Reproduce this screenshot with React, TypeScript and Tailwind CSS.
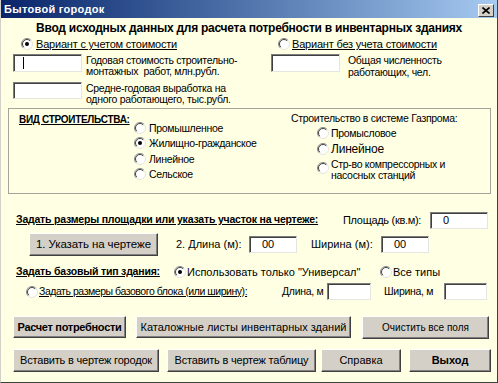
import React from 'react';

// Classic Win2000-style dialog for the "Бытовой городок" calculation

function Radio({ checked }: { checked?: boolean }) {
    return (
        <svg width="12" height="12" viewBox="0 0 12 12" className="shrink-0">
            <circle cx="6" cy="6" r="5.5" fill="#ffffff" />
            <path d="M9.9 2.1 A5.5 5.5 0 0 0 2.1 9.9" stroke="#8a8a8a" strokeWidth="1" fill="none" />
            <path d="M9.2 2.8 A4.5 4.5 0 0 0 2.8 9.2" stroke="#404040" strokeWidth="1" fill="none" />
            <path d="M9.9 2.1 A5.5 5.5 0 0 1 2.1 9.9" stroke="#e4e4dc" strokeWidth="1" fill="none" />
            {checked && <circle cx="6" cy="6" r="2" fill="#000000" />}
        </svg>
    );
}

function Field({ className, value, caret }: { className: string; value?: string; caret?: boolean }) {
    return (
        <div
            className={
                'shrink-0 bg-white border-t border-l border-t-[#7c7c7c] border-l-[#7c7c7c] border-r border-b border-r-[#e6e6e0] border-b-[#e6e6e0] shadow-[inset_1px_1px_0_#404040] flex items-center text-[11px] tracking-normal ' +
                className
            }
        >
            {caret && <div className="ml-[9px] w-[1px] h-[12px] bg-black" />}
            {value && <span className="ml-[12px]">{value}</span>}
        </div>
    );
}

function Button({ className, children }: { className: string; children: React.ReactNode }) {
    return (
        <div
            className={
                'shrink-0 whitespace-nowrap bg-[#d4d0c8] border-t border-l border-t-white border-l-white border-r border-b border-r-[#404040] border-b-[#404040] shadow-[inset_-1px_-1px_0_#808080] flex items-center justify-center ' +
                className
            }
        >
            {children}
        </div>
    );
}

export default function App() {
    return (
        <div className="w-[498px] h-[383px] bg-[#ffffe4] flex flex-col overflow-hidden whitespace-nowrap border-l border-l-[#d4d0c8] border-r border-b border-r-[#404040] border-b-[#404040] text-black text-[10.5px] tracking-[-0.3px] font-['Liberation_Sans',Arial,sans-serif]">
            {/* Title bar */}
            <div className="h-[18px] shrink-0 bg-linear-to-r from-[#0a246a] to-[#a6caf0] flex items-center pl-[3px]">
                <span className="text-white font-bold text-[11px] tracking-[0.3px]">Бытовой городок</span>
                <div className="ml-auto mr-[3px] mt-[2px] w-[16px] h-[13px] bg-[#d4d0c8] border-t border-l border-t-white border-l-white border-r border-b border-r-[#404040] border-b-[#404040] flex items-center justify-center">
                    <svg width="8" height="7" viewBox="0 0 8 7">
                        <path d="M0.5 0.5 L7.5 6.5 M7.5 0.5 L0.5 6.5" stroke="#000" strokeWidth="1.6" />
                    </svg>
                </div>
            </div>

            <div className="mt-[3px] text-center font-bold text-[12px] tracking-[-0.25px] leading-[14px]">
                Ввод исходных данных для расчета потребности в инвентарных зданиях
            </div>

            {/* Variants */}
            <div className="flex mt-[3px]">
                <div className="ml-[12px] w-[258px] flex flex-col">
                    <div className="h-[12px] flex items-center ml-[8px] gap-[3px]">
                        <Radio checked />
                        <span className="underline underline-offset-1 leading-[12px] text-[11px] tracking-[-0.2px]">Вариант с учетом стоимости</span>
                    </div>
                    <div className="flex mt-[4px]">
                        <Field className="w-[69px] h-[18px]" caret />
                        <div className="ml-[4px] mt-[1px] leading-[11px]">
                            Годовая стоимость строительно-
                            <br />
                            монтажных&nbsp; работ, млн.рубл.
                        </div>
                    </div>
                    <div className="flex mt-[5px]">
                        <Field className="w-[69px] h-[17px]" />
                        <div className="ml-[4px] mt-[1px] leading-[11px]">
                            Средне-годовая выработка на
                            <br />
                            одного работающего, тыс.рубл.
                        </div>
                    </div>
                </div>
                <div className="flex flex-col">
                    <div className="h-[12px] flex items-center ml-[7px] gap-[2px]">
                        <Radio />
                        <span className="underline underline-offset-1 leading-[12px] text-[11px] tracking-[-0.2px]">Вариант без учета стоимости</span>
                    </div>
                    <div className="flex mt-[4px]">
                        <Field className="w-[69px] h-[18px]" />
                        <div className="ml-[8px] leading-[12px]">
                            Общая численность
                            <br />
                            работающих, чел.
                        </div>
                    </div>
                </div>
            </div>

            {/* Construction kind frame */}
            <div className="ml-[7px] mt-[3px] w-[483px] h-[86px] shrink-0 border border-[#a4a49a] flex pt-[3px]">
                <div className="w-[282px] flex">
                    <div className="ml-[10px] mt-[2px] w-[115px] font-bold underline underline-offset-1 leading-[12px] text-[10px] tracking-[-0.3px]">
                        ВИД СТРОИТЕЛЬСТВА:
                    </div>
                    <div className="mt-[8px] flex flex-col">
                        {['Промышленное', 'Жилищно-гражданское', 'Линейное', 'Сельское'].map((t, i) => (
                            <div key={t} className="h-[15.5px] flex items-center gap-[3px]">
                                <Radio checked={i === 1} />
                                <span className="leading-[12px]">{t}</span>
                            </div>
                        ))}
                    </div>
                </div>
                <div className="flex flex-col">
                    <div className="leading-[12px]">Строительство в системе Газпрома:</div>
                    <div className="ml-[26px] flex flex-col">
                        <div className="mt-[1px] h-[16px] flex items-center gap-[2px]">
                            <Radio />
                            <span className="leading-[12px]">Промысловое</span>
                        </div>
                        <div className="h-[16px] flex items-center gap-[2px]">
                            <Radio />
                            <span className="leading-[12px] text-[12px] tracking-[-0.2px]">Линейное</span>
                        </div>
                        <div className="mt-[2px] flex items-start gap-[2px]">
                            <div className="mt-[3px]">
                                <Radio />
                            </div>
                            <span className="leading-[11px]">
                                Стр-во компрессорных и
                                <br />
                                насосных станций
                            </span>
                        </div>
                    </div>
                </div>
            </div>

            {/* Site size */}
            <div className="mt-[17px] h-[18px] flex items-center">
                <div className="ml-[15px] w-[327px] font-bold underline underline-offset-1 text-[10.5px] tracking-[-0.2px]">
                    Задать размеры площадки или указать участок на чертеже:
                </div>
                <div className="w-[87px] text-[11px] tracking-[-0.3px]">Площадь (кв.м):</div>
                <Field className="w-[58px] h-[17px]" value="0" />
            </div>

            <div className="mt-[4px] h-[23px] flex items-center">
                <Button className="ml-[28px] w-[129px] h-[23px] text-[11.5px] tracking-[-0.1px]">1. Указать на чертеже</Button>
                <div className="ml-[18px] w-[73px] text-[11px] tracking-[0px]">2. Длина (м):</div>
                <Field className="w-[48px] h-[17px]" value="00" />
                <div className="ml-[14px] w-[70px] text-[11px] tracking-[0px]">Ширина (м):</div>
                <Field className="w-[48px] h-[17px]" value="00" />
            </div>

            {/* Base building type */}
            <div className="mt-[9px] h-[14px] flex items-center">
                <div className="ml-[15px] w-[158px] font-bold underline underline-offset-1 text-[10.5px] tracking-[-0.2px]">
                    Задать базовый тип здания:
                </div>
                <div className="w-[206px] flex items-center gap-[1px]">
                    <Radio checked />
                    <span className="text-[11px] tracking-[0px]">Использовать только "Универсал"</span>
                </div>
                <div className="flex items-center gap-[1px]">
                    <Radio />
                    <span className="text-[11px] tracking-[0px]">Все типы</span>
                </div>
            </div>

            <div className="mt-[4px] h-[17px] flex items-center">
                <div className="ml-[25px] w-[256px] flex items-center gap-[1px]">
                    <Radio />
                    <span className="underline underline-offset-1 tracking-[-0.45px]">Задать размеры базового блока (или ширину):</span>
                </div>
                <div className="w-[45px]">Длина, м</div>
                <Field className="w-[44px] h-[17px]" />
                <div className="ml-[13px] w-[60px]">Ширина, м</div>
                <Field className="w-[43px] h-[17px]" />
            </div>

            {/* Action buttons */}
            <div className="mt-[16px] flex">
                <Button className="ml-[12px] w-[113px] h-[22px] font-bold text-[11px] tracking-[-0.3px]">Расчет потребности</Button>
                <Button className="ml-[10px] w-[215px] h-[22px] text-[11px] tracking-[0px]">Каталожные листы инвентарных зданий</Button>
                <Button className="ml-[11px] w-[127px] h-[23px] text-[10px] tracking-[0px]">Очистить все поля</Button>
            </div>
            <div className="mt-[10px] flex">
                <Button className="ml-[12px] w-[146px] h-[23px] text-[11px] tracking-[-0.2px]">Вставить в чертеж городок</Button>
                <Button className="ml-[8px] w-[149px] h-[23px] text-[11px] tracking-[-0.2px]">Вставить в чертеж таблицу</Button>
                <Button className="ml-[5px] w-[80px] h-[23px] text-[11px] tracking-[0px]">Справка</Button>
                <Button className="ml-[8px] w-[82px] h-[23px] font-bold text-[11px] tracking-[0px]">Выход</Button>
            </div>
        </div>
    );
}
